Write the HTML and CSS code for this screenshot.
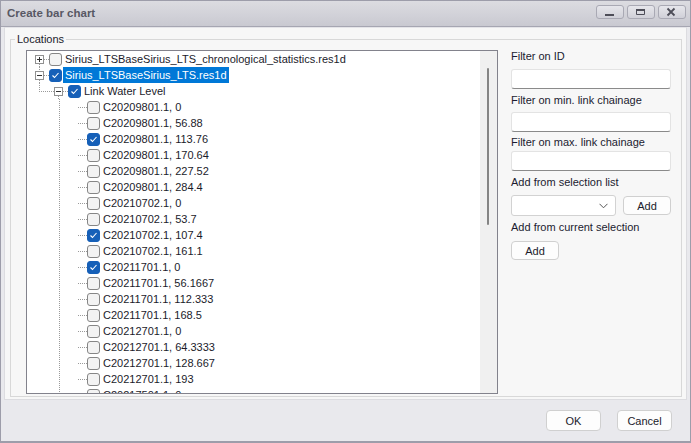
FILE: index.html
```html
<!DOCTYPE html>
<html lang="en">
<head>
    <meta charset="UTF-8">
    <meta name="viewport" content="width=device-width, initial-scale=1.0">
    <title>Create bar chart</title>
    <link rel="stylesheet" href="styles.css">
</head>
<body>
    <div class="window">
        <div class="titlebar">
            <span class="title">Create bar chart</span>
            <div class="caption-btns">
                <span class="cap-btn"><svg width="12" height="10" viewBox="0 0 12 10"><rect x="1" y="7" width="9" height="2" fill="#4d4d58"/></svg></span>
                <span class="cap-btn"><svg width="12" height="10" viewBox="0 0 12 10"><path d="M1.5 2.5h8v5h-8z" fill="none" stroke="#4d4d58"/><rect x="1" y="2" width="9" height="2" fill="#4d4d58"/></svg></span>
                <span class="cap-btn"><svg width="12" height="10" viewBox="0 0 12 10"><path d="M1.5 1.5l7 7M8.5 1.5l-7 7" stroke="#4d4d58" stroke-width="1.8"/></svg></span>
            </div>
        </div>

        <div class="panel">
            <fieldset class="group">
                <legend>Locations</legend>
                <div class="group-body">
                    <div class="tree">
                        <div class="tree-list">
                            <div class="row">
                                <span class="cell root-first"><svg class="exp" width="9" height="9" viewBox="0 0 9 9"><rect x=".5" y=".5" width="8" height="8" fill="#fff" stroke="#919191"/><path d="M2 4.5h5M4.5 2v5" stroke="#333"/></svg></span>
                                <span class="cb"></span><span class="lbl">Sirius_LTSBaseSirius_LTS_chronological_statistics.res1d</span>
                            </div>
                            <div class="row">
                                <span class="cell root-mid"><svg class="exp" width="9" height="9" viewBox="0 0 9 9"><rect x=".5" y=".5" width="8" height="8" fill="#fff" stroke="#919191"/><path d="M2 4.5h5" stroke="#333"/></svg></span>
                                <span class="cb on"><svg width="11" height="11" viewBox="0 0 11 11"><path d="M2.5 5.5l2 2 4-4.5" fill="none" stroke="#fff" stroke-width="1.1"/></svg></span><span class="lbl sel">Sirius_LTSBaseSirius_LTS.res1d</span>
                            </div>
                            <div class="row">
                                <span class="cell root-last"></span>
                                <span class="cell node"><svg class="exp" width="9" height="9" viewBox="0 0 9 9"><rect x=".5" y=".5" width="8" height="8" fill="#fff" stroke="#919191"/><path d="M2 4.5h5" stroke="#333"/></svg></span>
                                <span class="cb on"><svg width="11" height="11" viewBox="0 0 11 11"><path d="M2.5 5.5l2 2 4-4.5" fill="none" stroke="#fff" stroke-width="1.1"/></svg></span><span class="lbl">Link Water Level</span>
                            </div>
                            <div class="row"><span class="cell"></span><span class="cell ln-v"></span><span class="cell ln-h"></span><span class="cb"></span><span class="lbl">C20209801.1, 0</span></div>
                            <div class="row"><span class="cell"></span><span class="cell ln-v"></span><span class="cell ln-h"></span><span class="cb"></span><span class="lbl">C20209801.1, 56.88</span></div>
                            <div class="row"><span class="cell"></span><span class="cell ln-v"></span><span class="cell ln-h"></span><span class="cb on"><svg width="11" height="11" viewBox="0 0 11 11"><path d="M2.5 5.5l2 2 4-4.5" fill="none" stroke="#fff" stroke-width="1.1"/></svg></span><span class="lbl">C20209801.1, 113.76</span></div>
                            <div class="row"><span class="cell"></span><span class="cell ln-v"></span><span class="cell ln-h"></span><span class="cb"></span><span class="lbl">C20209801.1, 170.64</span></div>
                            <div class="row"><span class="cell"></span><span class="cell ln-v"></span><span class="cell ln-h"></span><span class="cb"></span><span class="lbl">C20209801.1, 227.52</span></div>
                            <div class="row"><span class="cell"></span><span class="cell ln-v"></span><span class="cell ln-h"></span><span class="cb"></span><span class="lbl">C20209801.1, 284.4</span></div>
                            <div class="row"><span class="cell"></span><span class="cell ln-v"></span><span class="cell ln-h"></span><span class="cb"></span><span class="lbl">C20210702.1, 0</span></div>
                            <div class="row"><span class="cell"></span><span class="cell ln-v"></span><span class="cell ln-h"></span><span class="cb"></span><span class="lbl">C20210702.1, 53.7</span></div>
                            <div class="row"><span class="cell"></span><span class="cell ln-v"></span><span class="cell ln-h"></span><span class="cb on"><svg width="11" height="11" viewBox="0 0 11 11"><path d="M2.5 5.5l2 2 4-4.5" fill="none" stroke="#fff" stroke-width="1.1"/></svg></span><span class="lbl">C20210702.1, 107.4</span></div>
                            <div class="row"><span class="cell"></span><span class="cell ln-v"></span><span class="cell ln-h"></span><span class="cb"></span><span class="lbl">C20210702.1, 161.1</span></div>
                            <div class="row"><span class="cell"></span><span class="cell ln-v"></span><span class="cell ln-h"></span><span class="cb on"><svg width="11" height="11" viewBox="0 0 11 11"><path d="M2.5 5.5l2 2 4-4.5" fill="none" stroke="#fff" stroke-width="1.1"/></svg></span><span class="lbl">C20211701.1, 0</span></div>
                            <div class="row"><span class="cell"></span><span class="cell ln-v"></span><span class="cell ln-h"></span><span class="cb"></span><span class="lbl">C20211701.1, 56.1667</span></div>
                            <div class="row"><span class="cell"></span><span class="cell ln-v"></span><span class="cell ln-h"></span><span class="cb"></span><span class="lbl">C20211701.1, 112.333</span></div>
                            <div class="row"><span class="cell"></span><span class="cell ln-v"></span><span class="cell ln-h"></span><span class="cb"></span><span class="lbl">C20211701.1, 168.5</span></div>
                            <div class="row"><span class="cell"></span><span class="cell ln-v"></span><span class="cell ln-h"></span><span class="cb"></span><span class="lbl">C20212701.1, 0</span></div>
                            <div class="row"><span class="cell"></span><span class="cell ln-v"></span><span class="cell ln-h"></span><span class="cb"></span><span class="lbl">C20212701.1, 64.3333</span></div>
                            <div class="row"><span class="cell"></span><span class="cell ln-v"></span><span class="cell ln-h"></span><span class="cb"></span><span class="lbl">C20212701.1, 128.667</span></div>
                            <div class="row"><span class="cell"></span><span class="cell ln-v"></span><span class="cell ln-h"></span><span class="cb"></span><span class="lbl">C20212701.1, 193</span></div>
                            <div class="row"><span class="cell"></span><span class="cell ln-v"></span><span class="cell ln-h"></span><span class="cb"></span><span class="lbl">C20217501.1, 0</span></div>
                        </div>
                        <div class="vscroll"><div class="thumb"></div></div>
                    </div>

                    <div class="filters">
                        <label class="flabel">Filter on ID</label>
                        <input class="textbox tb1" type="text">
                        <label class="flabel fl2">Filter on min. link chainage</label>
                        <input class="textbox tb2" type="text">
                        <label class="flabel fl3">Filter on max. link chainage</label>
                        <input class="textbox tb3" type="text">
                        <label class="flabel fl4">Add from selection list</label>
                        <div class="combo-row">
                            <div class="combo"><svg width="9" height="6" viewBox="0 0 9 6"><path d="M.5 .8l4 4 4-4" fill="none" stroke="#555" stroke-width="1"/></svg></div>
                            <button class="btn add-small">Add</button>
                        </div>
                        <label class="flabel fl5">Add from current selection</label>
                        <button class="btn add-current">Add</button>
                    </div>
                </div>
            </fieldset>
        </div>

        <div class="footer">
            <button class="btn dlg-btn">OK</button>
            <button class="btn dlg-btn">Cancel</button>
        </div>
    </div>
</body>
</html>
```

FILE: styles.css
```css
:root {
    --dv: repeating-linear-gradient(#9a9a9a 0 1px, transparent 1px 2px);
    --dh: repeating-linear-gradient(90deg, #9a9a9a 0 1px, transparent 1px 2px);
}
* {
    box-sizing: border-box;
}
body {
    margin: 0;
    font-family: "Liberation Sans", Arial, sans-serif;
    font-size: 11px;
    color: #1b1b2b;
    background: #e9e9ed;
}
.window {
    width: 691px;
    height: 443px;
    border: 1px solid #9d9daa;
    border-bottom-width: 2px;
    background: #e9e9ed;
    display: flex;
    flex-direction: column;
}
.titlebar {
    height: 26px;
    flex: none;
    display: flex;
    align-items: center;
    justify-content: space-between;
    padding: 0 4px 0 6px;
    background: linear-gradient(#dcdce1, #c9c9d1);
    border-bottom: 1px solid #a6a6b2;
}
.title {
    font-weight: bold;
    font-size: 11.5px;
    color: #585864;
    margin-top: -1px;
}
.caption-btns {
    display: flex;
    gap: 3px;
    margin-top: -4px;
}
.cap-btn {
    width: 28px;
    height: 14px;
    border: 1px solid #a9a9b4;
    border-radius: 3px;
    background: linear-gradient(#e6e6eb, #d0d0d8);
    display: flex;
    align-items: center;
    justify-content: center;
}
.panel {
    margin: 0 3px;
    border: 1px solid #dcdce0;
    border-top-color: #e4e4e8;
    background: #f7f7f7;
    padding-bottom: 2px;
}
.group {
    margin: 5px 4px 0 5px;
    padding: 4px 10px 2px 15px;
    border: 1px solid #d8d8d8;
    min-width: 0;
}
.group legend {
    padding: 0 2px;
    margin-left: -11px;
    line-height: 13px;
    color: #1b1b2b;
}
.group-body {
    display: flex;
}
.tree {
    flex: 1;
    height: 344px;
    border: 1px solid #82828c;
    background: #fff;
    display: flex;
    overflow: hidden;
}
.tree-list {
    flex: 1;
    padding-left: 3px;
    overflow: hidden;
}
.row {
    height: 16px;
    display: flex;
    align-items: center;
    white-space: nowrap;
}
.cell {
    width: 19px;
    height: 16px;
    flex: none;
    align-self: flex-start;
    background-repeat: no-repeat;
}
.exp {
    display: block;
    margin: 4px 0 0 5px;
}
.root-first {
    background-image: var(--dh), var(--dv);
    background-position: 14px 8px, 9px 13px;
    background-size: 5px 1px, 1px 3px;
}
.root-mid {
    background-image: var(--dv), var(--dh), var(--dv);
    background-position: 9px 0, 14px 8px, 9px 13px;
    background-size: 1px 4px, 5px 1px, 1px 3px;
}
.root-last {
    background-image: var(--dv), var(--dh);
    background-position: 9px 0, 9px 8px;
    background-size: 1px 8px, 10px 1px;
}
.node {
    background-image: var(--dh), var(--dh), var(--dv);
    background-position: 0 8px, 14px 8px, 9px 13px;
    background-size: 5px 1px, 5px 1px, 1px 3px;
}
.ln-v {
    background-image: var(--dv);
    background-position: 10px 0;
    background-size: 1px 16px;
}
.ln-h {
    background-image: var(--dh);
    background-position: 10px 8px;
    background-size: 9px 1px;
}
.cb {
    width: 13px;
    height: 13px;
    flex: none;
    border: 1px solid #868686;
    border-radius: 3px;
    background: #f3f3f3;
    display: flex;
    align-items: center;
    justify-content: center;
}
.cb.on {
    background: #1660b8;
    border-color: #1660b8;
}
.lbl {
    margin-left: 1px;
    padding: 0 2px;
    line-height: 16px;
}
.lbl.sel {
    background: #0078d7;
    color: #fff;
}
.vscroll {
    width: 17px;
    flex: none;
    background: #f0f0f0;
    padding: 17px 0 0 7px;
}
.thumb {
    width: 2px;
    height: 157px;
    border-radius: 1px;
    background: #858585;
}
.filters {
    width: 160px;
    margin-left: 13px;
    display: flex;
    flex-direction: column;
    align-items: flex-start;
}
.flabel {
    display: block;
    line-height: 13px;
    color: #1b1b30;
}
.fl2 { margin-top: 5px; }
.fl3 { margin-top: 4px; }
.fl4 { margin-top: 5px; }
.fl5 { margin-top: 5px; }
.textbox {
    width: 160px;
    height: 20px;
    border: 1px solid #e3e3e3;
    border-bottom-color: #8a8a8a;
    border-radius: 3px;
    background: #fff;
    outline: none;
}
.tb1 { margin-top: 6px; }
.tb2 { margin-top: 5px; }
.tb3 { margin-top: 2px; }
.combo-row {
    display: flex;
    align-items: center;
    gap: 7px;
    margin-top: 6px;
}
.combo {
    width: 105px;
    height: 21px;
    border: 1px solid #d2d2d2;
    border-radius: 3px;
    background: #fff;
    display: flex;
    align-items: center;
    justify-content: flex-end;
    padding-right: 7px;
}
.btn {
    font-family: "Liberation Sans", Arial, sans-serif;
    font-size: 11px;
    color: #1b1b2b;
    background: #fdfdfd;
    border: 1px solid #d0d0d0;
    border-radius: 4px;
    padding: 0;
}
.add-small {
    width: 48px;
    height: 19px;
}
.add-current {
    width: 48px;
    height: 19px;
    margin-top: 7px;
}
.footer {
    flex: 1;
    display: flex;
    justify-content: flex-end;
    align-items: flex-start;
    gap: 16px;
    padding: 10px 18px 0 0;
}
.dlg-btn {
    width: 55px;
    height: 21px;
}
```
